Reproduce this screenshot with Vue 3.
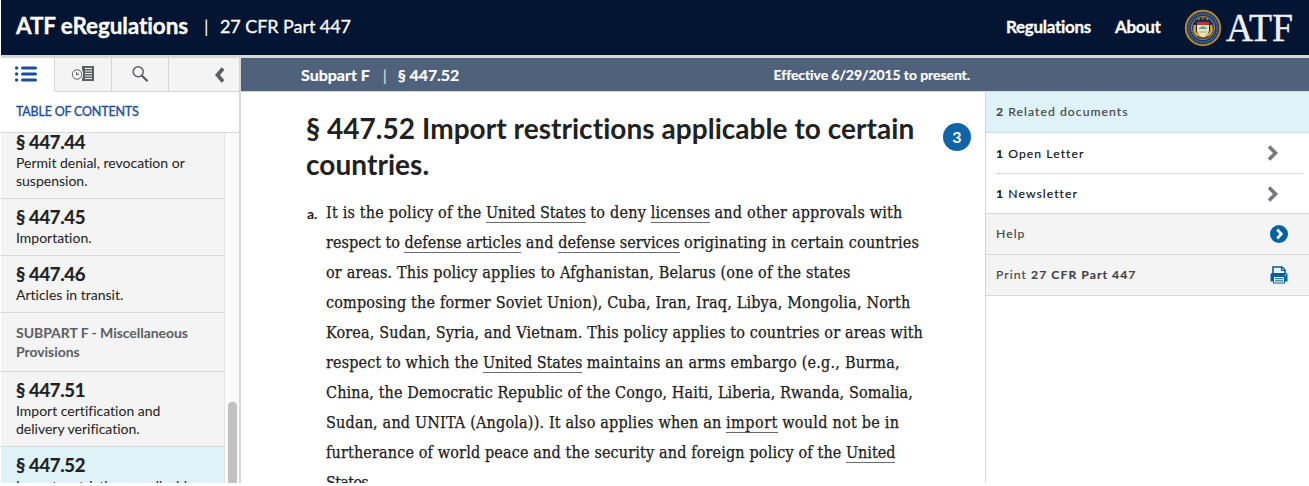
<script setup>
import { ref, onMounted } from 'vue'

const toc = [
  { num: '§ 447.44', title: ['Permit denial, revocation or', 'suspension.'] },
  { num: '§ 447.45', title: ['Importation.'] },
  { num: '§ 447.46', title: ['Articles in transit.'] },
  { subpart: ['SUBPART F - Miscellaneous', 'Provisions'] },
  { num: '§ 447.51', title: ['Import certification and', 'delivery verification.'] },
  { num: '§ 447.52', title: ['Import restrictions applicable', 'to certain countries.'], active: true },
]

// Each line is a list of runs: text, advance width, and whether it is a defined term
const lines = [
  [['It is the policy of the', 155.5], ['United States', 100, 1], ['to deny', 56], ['licenses', 59.5, 1], ['and other approvals with', 188]],
  [['respect to', 74], ['defense articles', 117, 1], ['and', 28], ['defense services', 121.5, 1], ['originating in certain countries', 235]],
  [['or areas. This policy applies to Afghanistan, Belarus (one of the states', 524.5]],
  [['composing the former Soviet Union), Cuba, Iran, Iraq, Libya, Mongolia, North', 584.5]],
  [['Korea, Sudan, Syria, and Vietnam. This policy applies to countries or areas with', 597]],
  [['respect to which the', 152.5], ['United States', 99.5, 1], ['maintains an arms embargo (e.g., Burma,', 313]],
  [['China, the Democratic Republic of the Congo, Haiti, Liberia, Rwanda, Somalia,', 587]],
  [['Sudan, and UNITA (Angola)). It also applies when an', 395.5], ['import', 52, 1], ['would not be in', 117]],
  [['furtherance of world peace and the security and foreign policy of the', 515.5], ['United', 49.5, 1]],
  [['States.', 46]],
]

const para = ref(null)
onMounted(() => {
  // Even out letter spacing so every run fills its measure
  para.value.querySelectorAll('.run').forEach((box) => {
    const t = box.firstElementChild
    const w = t.getBoundingClientRect().width
    const lead = parseFloat(getComputedStyle(box).paddingLeft)
    const room = box.getBoundingClientRect().width - lead
    t.style.letterSpacing = (room - w) / t.textContent.length + 'px'
  })
})
</script>

<template>
  <div class="page">
    <header class="top">
      <span class="brand">ATF eRegulations</span>
      <span class="bar">|</span>
      <span class="part">27 CFR Part 447</span>
      <nav>
        <a class="n1">Regulations</a>
        <a class="n2">About</a>
        <svg class="logo" width="113" height="48" viewBox="0 -4 113 48">
          <circle cx="19" cy="20" r="17.2" fill="#1b3566" stroke="#b58a22" stroke-width="2" />
          <circle cx="19" cy="20" r="14.2" fill="none" stroke="#7f91b4" stroke-width="2.2" stroke-dasharray="1 1" opacity=".6" />
          <circle cx="19" cy="20" r="11.5" fill="#142a5b" stroke="#b99a45" stroke-width="1" />
          <path d="M11 17Q9 25 14 27Q19 30 24 27Q29 25 27 17" fill="none" stroke="#d5a632" stroke-width="2.5" />
          <path d="M13 14h12v9q-1 4-6 6q-5-2-6-6z" fill="#e9e2c2" />
          <path d="M13 14h12v3H13z" fill="#b93b2b" />
          <path d="M15 20l4-2 4 2v1h-8z" fill="#6c9d91" />
          <path d="M15 24h8" stroke="#b9a372" />
          <path d="M14 11h1.5M18.2 10.5h1.6M22.5 11H24" stroke="#d5a632" stroke-width="1.5" />
          <text x="42" y="33" textLength="67" lengthAdjust="spacingAndGlyphs">ATF</text>
        </svg>
      </nav>
    </header>

    <div class="body">
      <aside class="side">
        <div class="tabs">
          <div class="tab on">
            <svg width="24" height="18" viewBox="0 0 24 18">
              <g fill="#1a4f97"><circle cx="2.6" cy="3" r="1.7" /><circle cx="2.6" cy="9" r="1.7" /><circle cx="2.6" cy="15" r="1.7" /></g>
              <path d="M8.500 3h13M8.500 9h13M8.500 15h13" stroke="#1a4f97" stroke-width="3" stroke-linecap="round" />
            </svg>
          </div>
          <div class="tab">
            <svg width="24" height="18" viewBox="0 0 24 18">
              <circle cx="6" cy="9.500" r="4.700" fill="none" stroke="#5b5e62" stroke-width="1" />
              <path d="M5.500 7v3L8 8.800" fill="none" stroke="#5b5e62" stroke-width="1" />
              <path d="M11 1h12v15H11v-2.500l1-2v-4.500l-1-2z" fill="#5b5e62" />
              <path d="M14 3.500h7M14 6h7M14 8.500h7M14 11h7M14 13.500h7" stroke="#f4f4f4" stroke-width="1" />
            </svg>
          </div>
          <div class="tab">
            <svg width="18" height="18" viewBox="0 0 18 18" fill="none" stroke="#5b5e62" stroke-linecap="round">
              <circle cx="7.200" cy="6.800" r="5" stroke-width="1.500" /><path d="M11 10.800l5 4.800" stroke-width="2.200" />
            </svg>
          </div>
          <div class="tab close">
            <svg width="12" height="16" viewBox="0 0 12 16"><path d="M9 1.500L3.500 8L9 14.500" fill="none" stroke="#5b5e62" stroke-width="3.800" /></svg>
          </div>
        </div>
        <h2>TABLE OF CONTENTS</h2>
        <div class="scroller">
          <ol>
            <li v-for="(it, i) in toc" :key="i" :class="{ sub: it.subpart, active: it.active }">
              <template v-if="it.subpart"><div v-for="s in it.subpart" :key="s">{{ s }}</div></template>
              <template v-else>
                <strong>{{ it.num }}</strong>
                <div v-for="s in it.title" :key="s">{{ s }}</div>
              </template>
            </li>
          </ol>
          <div class="track"><div class="thumb"></div></div>
        </div>
      </aside>

      <main>
        <div class="sub-bar">
          <b>Subpart F</b><i>|</i><b class="sec">§ 447.52</b>
          <b class="eff">Effective 6/29/2015 to present.</b>
        </div>
        <div class="cols">
          <article>
            <div class="title-row">
              <h1>§ 447.52 Import restrictions applicable to certain<br>countries.</h1>
              <span class="badge">3</span>
            </div>
            <div class="reg">
              <span class="mark">a.</span>
              <div ref="para" class="para">
                <div v-for="(l, i) in lines" :key="i" class="line">
                  <span v-for="(r, j) in l" :key="j" class="run" :class="{ lead: j }" :style="{ width: r[1] + 'px' }"><span :class="{ term: r[2] }">{{ r[0] }}</span></span>
                </div>
              </div>
            </div>
          </article>

          <section class="right">
            <div class="row docs"><span><b>2</b> Related documents</span></div>
            <div class="group">
              <div class="row doc">
                <span><b>1</b> Open Letter</span>
                <svg width="12" height="16" viewBox="0 0 12 16"><path d="M2 1.500L8.500 8L2 14.500" fill="none" stroke="#77787c" stroke-width="3.600" /></svg>
              </div>
              <div class="row doc">
                <span><b>1</b> Newsletter</span>
                <svg width="12" height="16" viewBox="0 0 12 16"><path d="M2 1.500L8.500 8L2 14.500" fill="none" stroke="#77787c" stroke-width="3.600" /></svg>
              </div>
            </div>
            <div class="row tool">
              <span>Help</span>
              <svg width="18" height="18" viewBox="0 0 18 18"><circle cx="9" cy="9" r="9" fill="#0062a3" /><path d="M7.200 4.500L11.300 9L7.200 13.500" fill="none" stroke="#fff" stroke-width="2.700" /></svg>
            </div>
            <div class="row tool">
              <span>Print <b>27 CFR Part 447</b></span>
              <svg width="18" height="18" viewBox="0 0 18 18">
                <path d="M3 7V1h9l3 3v3" fill="#f4f4f4" stroke="#0062a3" stroke-width="1.600" />
                <path d="M11.500 1v3.500H15" fill="none" stroke="#0062a3" stroke-width="1.200" />
                <path d="M2 7h14q1.500 0 1.500 1.500V15.500H15v2H3v-2H.500V8.500Q.500 7 2 7z" fill="#0062a3" />
                <path d="M4 11h10v5.500H4z" fill="#f4f4f4" /><path d="M5 12.700h8M5 14.800h8" stroke="#0062a3" stroke-width="1" />
                <circle cx="15.600" cy="9" r=".7" fill="#fff" />
              </svg>
            </div>
          </section>
        </div>
      </main>
    </div>
  </div>
</template>

<style>
body { background: #fff; overflow: hidden; }
</style>

<style scoped>
.page { box-sizing: border-box; height: 483px; margin-left: 1px; overflow: hidden; font-family: Lato, sans-serif; font-variant-ligatures: none; color: #212121; display: flex; flex-direction: column; }
.top { box-sizing: border-box; flex: none; height: 58px; border-bottom: 3px solid #d6d7d9; background: #041433; color: #fff; display: flex; align-items: center; padding: 0 15px; white-space: nowrap; }
.brand { font-size: 22.5px; font-weight: 700; width: 188px; line-height: 50px; padding-bottom: 4px; letter-spacing: -.1px; -webkit-text-stroke: .3px #fff; }
.bar { font-size: 18px; width: 16px; padding-bottom: 3px; }
.part { font-size: 18px; padding-bottom: 3px; letter-spacing: -.07px; -webkit-text-stroke: .3px #fff; }
nav { margin-left: auto; display: flex; align-items: center; font-size: 17px; font-weight: 700; letter-spacing: -.3px; -webkit-text-stroke: .3px #fff; }
.n1, .n2 { padding-bottom: 2px; }
.n1 { width: 109px; }
.n2 { width: 69px; }
.logo { display: block; margin-right: -3px; -webkit-text-stroke: 0; }
.logo text { font-family: "Liberation Serif", serif; font-size: 39px; font-weight: 400; fill: #eef0f5; stroke: #eef0f5; stroke-width: .4px; letter-spacing: 0; }
.body { flex: 1; min-height: 0; display: flex; }
.side { box-sizing: border-box; width: 240px; border-right: 2px solid #d6d7d9; display: flex; flex-direction: column; }
.tabs { flex: none; display: flex; height: 34px; }
.tab { box-sizing: border-box; width: 57px; background: #f4f4f4; border-right: 1px solid #d6d7d9; border-bottom: 1px solid #d6d7d9; display: flex; align-items: center; justify-content: center; padding-bottom: 2px; }
.tab.on { width: 54px; background: #fff; border-bottom-color: #fff; padding-right: 3px; }
.tab.close { flex: 1; border-right: 0; justify-content: flex-end; padding-right: 13px; padding-bottom: 0; }
h2 { flex: none; margin: 0; height: 40px; line-height: 39px; padding-left: 15px; border-bottom: 1px solid #d6d7d9; font-size: 12.500px; font-weight: 400; letter-spacing: -.2px; -webkit-text-stroke: .35px #1a4f97; color: #1a4f97; white-space: nowrap; }
.scroller { flex: 1; min-height: 0; display: flex; overflow: hidden; }
ol { list-style: none; margin: -9px 0 0; padding: 0; width: 223px; border-right: 1px solid #e4e4e5; }
li { padding: 6px 15px 8px; border-bottom: 1px solid #d6d7d9; background: #f4f4f4; font-size: 14px; line-height: 18px; white-space: nowrap; }
li strong { display: block; font-size: 18.500px; line-height: 24px; letter-spacing: -.35px; -webkit-text-stroke: .2px #212121; }
li.sub { padding: 10px 15px; line-height: 19px; font-weight: 700; letter-spacing: -.05px; color: #5b5e62; }
li.active { background: #def2f8; }
.track { flex: 1; background: #fafafa; padding: 269px 2px 0 3px; }
.thumb { height: 100px; border-radius: 4px; background: #c1c1c1; }
main { flex: 1; min-width: 0; display: flex; flex-direction: column; }
.sub-bar { box-sizing: border-box; flex: none; height: 34px; background: #50627b; border-bottom: 1px solid #d6d7d9; color: #fff; display: flex; align-items: center; font-size: 16px; padding: 0 339px 0 60px; white-space: nowrap; -webkit-text-stroke: .2px #fff; }
.sub-bar i { font-style: normal; padding: 0 11px 0 13px; opacity: .75; }
.sec { letter-spacing: -.1px; }
.eff { margin-left: auto; font-size: 14px; letter-spacing: -.08px; }
.cols { flex: 1; min-height: 0; display: flex; }
article { width: 744px; flex: none; }
.title-row { display: flex; padding: 18px 0 0 65px; justify-content: space-between; }
h1 { margin: 0; font-size: 28px; line-height: 36px; font-weight: 700; white-space: nowrap; letter-spacing: .05px; }
.badge { width: 28px; height: 28px; margin: 13px 14px 0 0; border-radius: 50%; background: #1164a8; color: #fff; font-size: 16px; font-weight: 700; line-height: 28px; text-align: center; }
.reg { display: flex; padding: 15px 0 0 66px; }
.mark { width: 19px; font-size: 14px; font-weight: 700; line-height: 34px; }
.para { font-family: "DejaVu Serif Condensed", "DejaVu Serif", serif; font-stretch: condensed; font-size: 16px; line-height: 30px; padding-top: 1px; -webkit-text-stroke: .25px #212121; }
.line { height: 30px; display: flex; white-space: pre; }
.run { flex: none; }
.run.lead { padding-left: 4.400px; }
.term { border-bottom: 1px solid #6b6b6b; }
.right { flex: 1; border-left: 1px solid #d6d7d9; font-size: 12.200px; letter-spacing: 1.05px; -webkit-text-stroke: .15px; }
.row { height: 40px; display: flex; align-items: center; justify-content: space-between; padding-left: 10px; border-bottom: 1px solid #d6d7d9; }
.row > span { padding-bottom: 1px; white-space: nowrap; }
.docs { background: #def2f8; color: #3e4449; }
.group { padding: 0 6px 0 10px; border-bottom: 1px solid #d6d7d9; color: #111; }
.doc { padding: 0 24px 0 0; }
.doc:last-child { border-bottom: 0; height: 39px; }
.row.doc > span { padding-bottom: 0; }
.tool { background: #f4f4f4; color: #3e4449; padding-right: 21px; }
</style>
